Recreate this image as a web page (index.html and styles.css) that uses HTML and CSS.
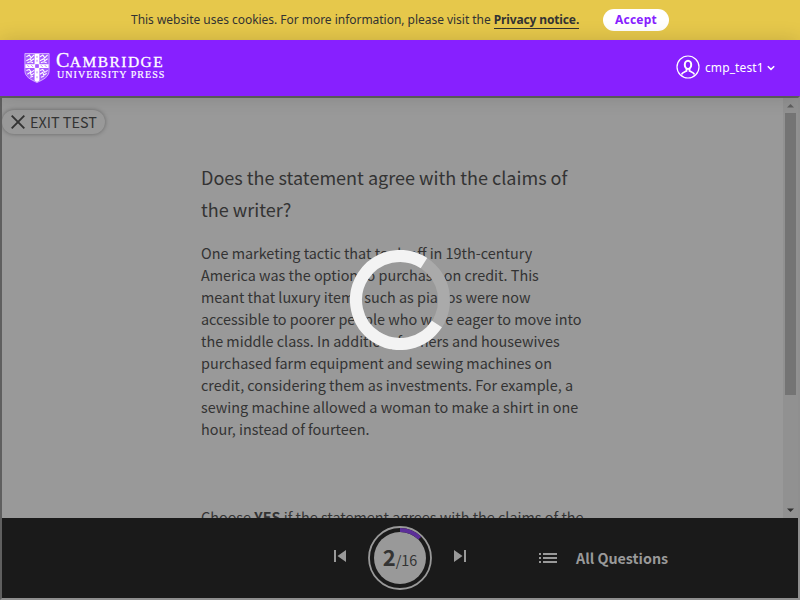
FILE: index.html
```html
<!DOCTYPE html>
<html lang="en">
<head>
<meta charset="utf-8">
<title>Practice test</title>
<link rel="stylesheet" href="styles.css">
</head>
<body>
<div class="cookie-bar">
  <p class="cookie-text">This website uses cookies. For more information, please visit the <a class="cookie-link">Privacy notice.</a></p>
  <button class="accept">Accept</button>
</div>
<header class="header">
  <div class="brand">
    <svg class="shield" viewBox="0 0 26 31">
      <path d="M.5.5h25v18c0 6-6 9-12.500 12C6.500 27.500.500 24.500.500 18.500z" fill="#a75cff" stroke="#e3ccff" stroke-width=".8"/>
      <path d="M2 4l3-2 2 3 3-3M2 8l4-2 1 2 3-2M3 10l3-1 3 1M16 4l3-2 2 3 3-3M16 8l4-2 1 2 3-2M17 10l3-1 3 1M2 18l3-1 2 3 3-2M3 22l3-2 1 3 3-2M6 25l3-1M16 18l3-1 2 3 3-2M16 22l3-2 1 3 3-2M17 25l3-1" fill="none" stroke="#fff" stroke-width="1.100"/>
      <path d="M10.500 1h5v27.500L13 30l-2.500-1.500zM1 11.500h24v4H1z" fill="#fff"/>
      <path d="M3 12.500l2 2M7 12.500l2 2M17 12.500l2 2M21 12.500l2 2M13 3v2M13 7v2M13 19v2M13 24v2M11.500 12h3v3h-3z" fill="#a75cff" stroke="#a75cff" stroke-width=".8"/>
    </svg>
    <div class="brand-name">
      <span class="brand-top"><span class="brand-cap">C</span>AMBRIDGE</span>
      <span class="brand-sub">UNIVERSITY PRESS</span>
    </div>
  </div>
  <div class="account">
    <svg class="avatar" viewBox="0 0 24 24" fill="none" stroke="#fff">
      <circle cx="12" cy="12" r="11" stroke-width="1.200"/>
      <ellipse cx="12" cy="9.800" rx="3.200" ry="4.100" stroke-width="2"/>
      <path d="M5.500 19.500c1-2.300 3-2.400 5-3.500v-2.500M18.500 19.500c-1-2.300-3-2.400-5-3.500v-2.500" stroke-width="1.800"/>
    </svg>
    <span class="user">cmp_test1</span>
    <svg class="chevron" viewBox="0 0 8 6"><path d="M.8 1.200L4 4.400l3.200-3.200" fill="none" stroke="#fff" stroke-width="1.500"/></svg>
  </div>
</header>
<main class="frame">
  <div class="viewport">
    <section class="content">
      <button class="exit">
        <svg class="cross" viewBox="0 0 14 14"><path d="M.7.7l12.600 12.600M13.300.7L.7 13.300" stroke="#333" stroke-width="1.900"/></svg>
        <span class="exit-label">EXIT TEST</span>
      </button>
      <article class="question">
        <h1 class="title">Does the statement agree with the claims of<br>the writer?</h1>
        <p class="passage">One marketing tactic that took off in 19th-century<br>America was the option to purchase on credit. This<br>meant that luxury items such as pianos were now<br>accessible to poorer people who were eager to move into<br>the middle class. In addition, farmers and housewives<br>purchased farm equipment and sewing machines on<br>credit, considering them as investments. For example, a<br>sewing machine allowed a woman to make a shirt in one<br>hour, instead of fourteen.</p>
        <p class="passage hint">Choose <b>YES</b> if the statement agrees with the claims of the</p>
      </article>
    </section>
    <div class="scrollbar">
      <svg class="arrow" viewBox="0 0 15 15"><path d="M4 9.500h7L7.500 6z" fill="#5e5e5e"/></svg>
      <div class="thumb"></div>
      <svg class="arrow" viewBox="0 0 15 15"><path d="M4 5.500h7L7.500 9z" fill="#303030"/></svg>
    </div>
  </div>
  <footer class="toolbar">
    <div class="pager">
      <svg class="step" viewBox="0 0 12 12"><path d="M0 0h2v12H0zM12 0v12L3.500 6z" fill="#999"/></svg>
      <div class="progress">
        <svg class="ring" viewBox="0 0 64 64">
          <circle cx="32" cy="32" r="31" fill="none" stroke="#999" stroke-width="1.800"/>
          <circle cx="32" cy="32" r="26" fill="#999"/>
          <path d="M32 4a28 28 0 0 1 19.800 8.200" fill="none" stroke="#5c2e99" stroke-width="4"/>
        </svg>
        <span class="count"><b class="current">2</b>/16</span>
      </div>
      <svg class="step" viewBox="0 0 12 12"><path d="M10 0h2v12h-2zM0 0v12l8.500-6z" fill="#999"/></svg>
    </div>
    <div class="all">
      <svg class="list" viewBox="0 0 18 10"><path d="M0 0h2v2H0zM4 0h14v2H4zM0 4h2v2H0zM4 4h14v2H4zM0 8h2v2H0zM4 8h14v2H4z" fill="#999"/></svg>
      <span class="all-label">All Questions</span>
    </div>
  </footer>
</main>
<svg class="spinner" viewBox="0 0 100 100" fill="none" stroke-width="12">
  <circle cx="50" cy="50" r="44" stroke="#aaa"/>
  <circle cx="50" cy="50" r="44" stroke="#f3f3f3" pathLength="360" stroke-dasharray="270 90" transform="rotate(33 50 50)"/>
</svg>
</body>
</html>
```
FILE: styles.css
```css
* { box-sizing: border-box; }
body {
  margin: 0;
  width: 800px;
  height: 600px;
  overflow: hidden;
  display: flex;
  flex-direction: column;
  font-family: "Noto Sans CJK SC", sans-serif;
  color: #333;
}
button { border: 0; padding: 0; font: inherit; color: inherit; }
p, h1 { margin: 0; white-space: nowrap; }
svg { display: block; flex: none; }
.cookie-bar {
  height: 40px;
  flex: none;
  display: flex;
  align-items: center;
  justify-content: space-between;
  padding: 0 131px;
  background: #e6c84b;
  font-family: "Noto Sans", sans-serif;
  font-size: 12px;
}
.cookie-text { letter-spacing: -0.03px; padding-bottom: 2px; }
.cookie-link { font-weight: 700; border-bottom: 1px solid #333; letter-spacing: -0.14px; }
.accept {
  width: 66px;
  height: 22px;
  border-radius: 11px;
  background: #fff;
  color: #8720ff;
  font-weight: 700;
  line-height: 22px;
  letter-spacing: 0.2px;
}
.header {
  position: relative;
  z-index: 1;
  height: 56px;
  flex: none;
  display: flex;
  align-items: center;
  justify-content: space-between;
  padding: 0 24px;
  background: #8720ff;
  box-shadow: 0 0 20px rgba(0, 0, 0, 0.15);
  color: #fff;
}
.brand { display: flex; gap: 6px; align-items: flex-start; height: 31px; }
.shield { width: 26px; height: 30px; }
.brand-name { font-family: "Liberation Serif", serif; display: flex; flex-direction: column; white-space: nowrap; }
.brand-top { font-size: 15.5px; line-height: 14px; height: 17px; letter-spacing: 1.45px; -webkit-text-stroke: 0.3px #fff; }
.brand-cap { font-size: 20px; letter-spacing: 0.5px; }
.brand-sub { font-size: 10px; line-height: 9px; letter-spacing: 1.05px; padding-left: 1px; -webkit-text-stroke: 0.2px #fff; }
.account { display: flex; align-items: center; margin-right: 1px; font-family: "Noto Sans", sans-serif; font-size: 12px; }
.avatar { width: 24px; height: 24px; margin: -2px 5px 0 0; }
.user { width: 59px; margin-top: -2px; letter-spacing: 0.1px; }
.chevron { width: 8px; height: 6px; margin-left: 3px; }
.frame {
  flex: 1;
  min-height: 0;
  display: flex;
  flex-direction: column;
  border: 2px solid;
  border-color: #5f5f5f #8f8f8f #8f8f8f #5f5f5f;
  background: #999;
}
.viewport { height: 420px; flex: none; display: flex; overflow: hidden; }
.content { flex: 1; overflow: hidden; padding-top: 12px; }
.exit {
  display: flex;
  align-items: center;
  width: 103px;
  height: 24px;
  padding-left: 9px;
  gap: 5px;
  border-radius: 12px;
  background: #999;
  box-shadow: 0 0 4px rgba(0, 0, 0, 0.35);
  white-space: nowrap;
}
.cross { width: 14px; height: 14px; }
.exit-label { font-size: 14.4px; line-height: 24px; }
.question { margin: 27px 0 0 199px; }
.title { font-size: 18.05px; font-weight: 400; line-height: 32px; }
.passage { font-size: 14.4px; line-height: 22px; margin-top: 17px; }
.hint { margin-top: 66px; }
.scrollbar { width: 15px; display: flex; flex-direction: column; background: #919191; }
.arrow { width: 15px; height: 15px; }
.thumb { width: 11px; height: 282px; margin: 0 2px 108px; background: #747474; }
.toolbar { height: 80px; display: flex; align-items: center; background: #1a1a1a; color: #999; }
.pager { display: flex; align-items: center; margin-left: 332px; }
.step { width: 12px; height: 12px; margin-top: -4px; }
.progress { display: grid; place-items: center; margin: 0 22px; width: 64px; height: 64px; }
.ring, .count { grid-area: 1 / 1; }
.ring { width: 64px; height: 64px; }
.count { color: #333; font-size: 14.4px; line-height: 32px; white-space: nowrap; }
.current { font-size: 22px; }
.all { display: flex; align-items: center; margin-left: 73px; }
.list { width: 18px; height: 10px; }
.all-label { margin: -2px 0 0 19px; font-size: 14.3px; font-weight: 700; white-space: nowrap; }
.spinner { position: absolute; z-index: 2; left: 350px; top: 250px; width: 100px; height: 100px; }
```
